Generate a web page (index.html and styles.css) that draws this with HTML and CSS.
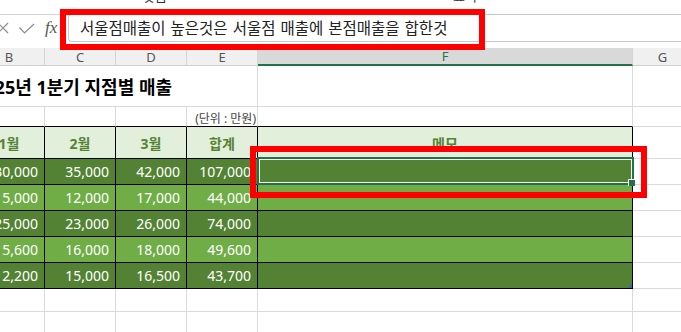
FILE: index.html
```html
<!DOCTYPE html>
<html lang="ko">
<head>
<meta charset="utf-8">
<title>지점별 매출</title>
<link rel="stylesheet" href="styles.css">
</head>
<body>
  <!-- 리본 아래쪽 끝 -->
  <div class="ribbon"><span class="frag f1">맞춤</span><span class="frag f2">표시</span></div>

  <!-- 수식 입력줄 -->
  <div class="fbar">
    <div class="tools">
      <svg class="ico" width="40" height="26" viewBox="0 0 40 26">
        <path d="M-2 8 L8 18 M8 8 L-2 18" stroke="#8c8c8c" stroke-width="1.2" fill="none"/>
        <path d="M19.5 12.5 L24.5 18 L34 9" stroke="#8c8c8c" stroke-width="1.2" fill="none"/>
      </svg>
      <span class="fx">fx</span>
    </div>
    <div class="finput">서울점매출이 높은것은 서울점 매출에 본점매출을 합한것</div>
  </div>
  <div class="gap"></div>

  <table class="sheet">
    <colgroup>
      <col class="c-std"><col class="c-std"><col class="c-std"><col class="c-std"><col class="c-memo"><col class="c-g">
    </colgroup>
    <thead>
      <tr class="colhead">
        <th>B</th><th>C</th><th>D</th><th>E</th><th class="sel">F</th><th>G</th>
      </tr>
    </thead>
    <tbody>
      <tr class="r-title">
        <td colspan="4" class="title">2025년 1분기 지점별 매출</td><td></td><td></td>
      </tr>
      <tr class="r-unit">
        <td class="tb"></td><td class="tb"></td><td class="tb"></td><td class="tb unit">(단위 : 만원)</td><td class="tb"></td><td></td>
      </tr>
      <tr class="r-head">
        <td>1월</td><td>2월</td><td>3월</td><td>합계</td><td class="memo">메모</td><td class="out"></td>
      </tr>
      <tr class="r-data dark">
        <td>30,000</td><td>35,000</td><td>42,000</td><td>107,000</td><td class="active"><div class="selbox"></div><div class="handle"></div></td><td class="out"></td>
      </tr>
      <tr class="r-data light">
        <td>15,000</td><td>12,000</td><td>17,000</td><td>44,000</td><td></td><td class="out"></td>
      </tr>
      <tr class="r-data dark">
        <td>25,000</td><td>23,000</td><td>26,000</td><td>74,000</td><td></td><td class="out"></td>
      </tr>
      <tr class="r-data light">
        <td>15,600</td><td>16,000</td><td>18,000</td><td>49,600</td><td></td><td class="out"></td>
      </tr>
      <tr class="r-data dark">
        <td>12,200</td><td>15,000</td><td>16,500</td><td>43,700</td><td class="last"></td><td class="out"></td>
      </tr>
      <tr class="r-empty"><td></td><td></td><td></td><td></td><td></td><td></td></tr>
      <tr class="r-empty"><td></td><td></td><td></td><td></td><td></td><td></td></tr>
    </tbody>
  </table>

  <!-- 빨간 강조 박스 -->
  <div class="mark mark-formula"></div>
  <div class="mark mark-cell"></div>
</body>
</html>
```

FILE: styles.css
```css
/* 엑셀 화면 전체 */
body {
  margin: 0;
  width: 681px;
  height: 332px;
  overflow: hidden;
  position: relative;
  background: #fff;
  font-family: "Noto Sans", "Noto Sans CJK KR", sans-serif;
}

/* 리본 (아래 끝만 보임) */
.ribbon {
  height: 14px;
  border-bottom: 1px solid #d4d4d4;
  overflow: hidden;
  display: flex;
}
.frag {
  font-size: 13px;
  line-height: 13px;
  margin-top: -10px;
  color: #333;
}
.f1 { margin-left: 143px; }
.f2 { margin-left: 286px; }

/* 수식 입력줄 */
.fbar {
  height: 26px;
  display: flex;
  align-items: flex-start;
}
.tools {
  width: 68px;
  flex: none;
  height: 26px;
  display: flex;
  align-items: center;
}
.ico { display: block; }
.fx {
  margin-left: 5px;
  font-family: "Liberation Serif", serif;
  font-style: italic;
  font-size: 17px;
  color: #555;
  line-height: 26px;
}
.finput {
  flex: 1;
  box-sizing: border-box;
  height: 28px;
  margin-top: -1px;
  padding-left: 11px;
  border: 1px solid #c8c8c8;
  border-right: none;
  border-radius: 4px 0 0 4px;
  font-size: 15.5px;
  word-spacing: 1px;
  line-height: 26px;
  color: #222;
  white-space: nowrap;
  overflow: hidden;
}
.gap { height: 7px; }

/* 시트 */
.sheet {
  margin-left: -26px;
  border-collapse: separate;
  border-spacing: 0;
  table-layout: fixed;
  width: 719px;
}
.c-std { width: 71px; }
.c-memo { width: 375px; }
.c-g { width: 60px; }

.sheet td, .sheet th {
  box-sizing: border-box;
  padding: 0;
  border-right: 1px solid #dadada;
  border-bottom: 1px solid #dadada;
  white-space: nowrap;
}

/* 열 머리글 */
.colhead th {
  height: 18px;
  background: #f0f0f0;
  border-right-color: #d4d4d4;
  border-bottom-color: #cfcfcf;
  font-size: 13px;
  font-weight: normal;
  color: #555;
  line-height: 16px;
}
.colhead th.sel {
  background: #d9d9d9;
  color: #217346;
  border-bottom: 2px solid #217346;
}

.r-title td { height: 41px; }
.title {
  font-size: 18px;
  font-weight: bold;
  color: #000;
  overflow: visible;
}

.r-unit td { height: 20px; }
.r-unit td.tb { border-bottom-color: #000; }
.unit {
  font-size: 12px;
  color: #444;
  text-align: right;
  vertical-align: bottom;
  padding-right: 1px !important;
  line-height: 15px;
}

/* 표 머리행 */
.r-head td {
  height: 32px;
  background: #e2efda;
  border-right-color: #000;
  border-bottom-color: #000;
  text-align: center;
  font-size: 14px;
  font-weight: bold;
  color: #548235;
}

/* 데이터 행 */
.r-data td {
  height: 26px;
  border-right-color: #000;
  border-bottom-color: #000;
  text-align: right;
  padding-right: 6px;
  font-size: 14px;
  color: #fff;
}
.r-data.dark td { background: #548235; }
.r-data.light td { background: #70ad47; }

/* 표 바깥 G열 */
.sheet tr td.out {
  background: #fff;
  border-right-color: #dadada;
  border-bottom-color: #dadada;
}

.r-empty td { height: 23px; }

/* 선택된 셀 */
.active, .last { position: relative; }
.selbox {
  position: absolute;
  top: -2px;
  left: -1px;
  right: -2px;
  bottom: -1px;
  border: 2px solid #217346;
  box-shadow: inset 0 0 0 1px #fff;
}
.handle {
  position: absolute;
  right: -3px;
  bottom: -2px;
  width: 6px;
  height: 6px;
  background: #217346;
  border-left: 1px solid #fff;
  border-top: 1px solid #fff;
}
.last::after {
  content: "";
  position: absolute;
  right: 0;
  bottom: 0;
  border-left: 4px solid transparent;
  border-bottom: 4px solid #3b5cc4;
}

/* 빨간 강조 표시 */
.mark {
  position: absolute;
  box-sizing: border-box;
  border: 6px solid #ff0000;
  z-index: 5;
}
.mark-formula {
  left: 60px;
  top: 9px;
  width: 425px;
  height: 41px;
}
.mark-cell {
  left: 250px;
  top: 146px;
  width: 397px;
  height: 52px;
}
```
